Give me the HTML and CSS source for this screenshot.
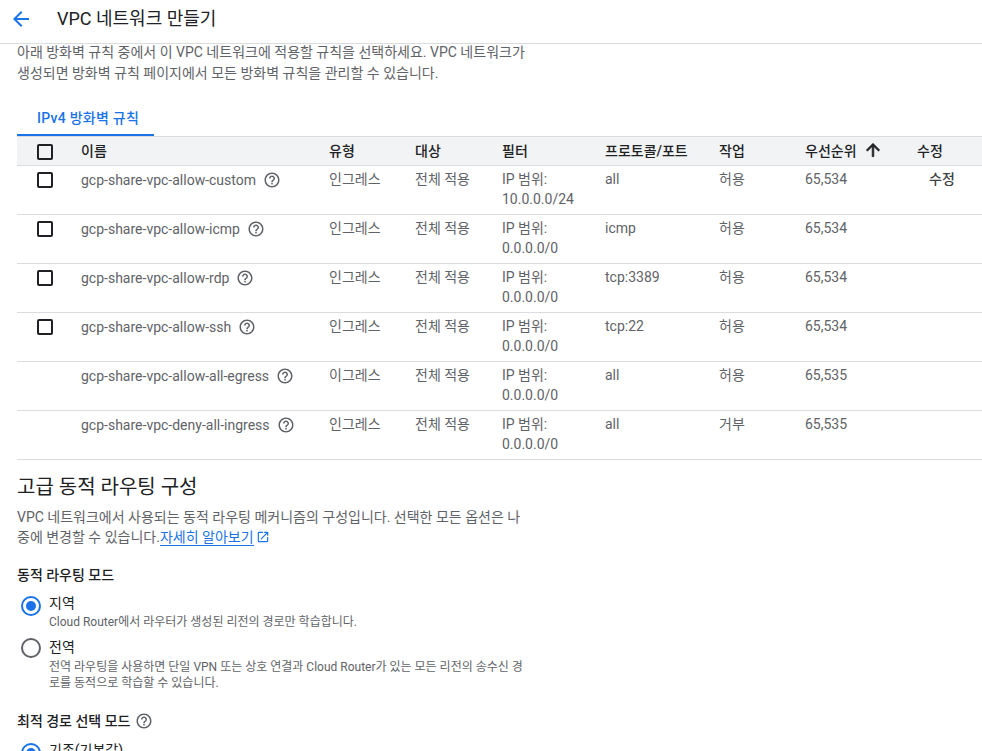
FILE: index.html
```html
<!DOCTYPE html>
<html lang="ko">
<head>
<meta charset="utf-8">
<title>VPC 네트워크 만들기</title>
<link rel="stylesheet" href="styles.css">
</head>
<body>
<header class="topbar">
  <svg class="back" viewBox="0 0 24 24" width="24" height="24"><path d="M20 11H7.83l5.59-5.59L12 4l-8 8 8 8 1.41-1.41L7.83 13H20z"/></svg>
  <h1 class="title">VPC 네트워크 만들기</h1>
</header>
<main class="content">
  <p class="intro">아래 방화벽 규칙 중에서 이 VPC 네트워크에 적용할 규칙을 선택하세요. VPC 네트워크가 생성되면 방화벽 규칙 페이지에서 모든 방화벽 규칙을 관리할 수 있습니다.</p>
  <div class="tabs"><div class="tab">IPv4 방화벽 규칙</div></div>
  <table class="rules">
    <colgroup><col class="c0"><col class="c1"><col class="c2"><col class="c3"><col class="c4"><col class="c5"><col class="c6"><col class="c7"><col class="c8"></colgroup>
    <thead>
      <tr>
        <th class="check"><span class="box"></span></th><th>이름</th><th>유형</th><th>대상</th><th>필터</th><th>프로토콜/포트</th><th>작업</th>
        <th><span class="sort">우선순위<svg viewBox="0 0 24 24" width="20" height="20"><path d="M4 12l1.41 1.41L11 7.83V20h2V7.83l5.58 5.59L20 12l-8-8z"/></svg></span></th><th>수정</th>
      </tr>
    </thead>
    <tbody>
      <tr>
        <td class="check"><span class="box"></span></td>
        <td><span class="name">gcp-share-vpc-allow-custom<svg class="help" viewBox="0 0 24 24" width="18" height="18"><use href="#help"/></svg></span></td>
        <td>인그레스</td><td>전체 적용</td><td>IP 범위:<br>10.0.0.0/24</td><td>all</td><td>허용</td><td>65,534</td><td class="edit">수정</td>
      </tr>
      <tr>
        <td class="check"><span class="box"></span></td>
        <td><span class="name">gcp-share-vpc-allow-icmp<svg class="help" viewBox="0 0 24 24" width="18" height="18"><use href="#help"/></svg></span></td>
        <td>인그레스</td><td>전체 적용</td><td>IP 범위:<br>0.0.0.0/0</td><td>icmp</td><td>허용</td><td>65,534</td><td></td>
      </tr>
      <tr>
        <td class="check"><span class="box"></span></td>
        <td><span class="name">gcp-share-vpc-allow-rdp<svg class="help" viewBox="0 0 24 24" width="18" height="18"><use href="#help"/></svg></span></td>
        <td>인그레스</td><td>전체 적용</td><td>IP 범위:<br>0.0.0.0/0</td><td>tcp:3389</td><td>허용</td><td>65,534</td><td></td>
      </tr>
      <tr>
        <td class="check"><span class="box"></span></td>
        <td><span class="name">gcp-share-vpc-allow-ssh<svg class="help" viewBox="0 0 24 24" width="18" height="18"><use href="#help"/></svg></span></td>
        <td>인그레스</td><td>전체 적용</td><td>IP 범위:<br>0.0.0.0/0</td><td>tcp:22</td><td>허용</td><td>65,534</td><td></td>
      </tr>
      <tr>
        <td class="check"></td>
        <td><span class="name">gcp-share-vpc-allow-all-egress<svg class="help" viewBox="0 0 24 24" width="18" height="18"><use href="#help"/></svg></span></td>
        <td>이그레스</td><td>전체 적용</td><td>IP 범위:<br>0.0.0.0/0</td><td>all</td><td>허용</td><td>65,535</td><td></td>
      </tr>
      <tr>
        <td class="check"></td>
        <td><span class="name">gcp-share-vpc-deny-all-ingress<svg class="help" viewBox="0 0 24 24" width="18" height="18"><use href="#help"/></svg></span></td>
        <td>인그레스</td><td>전체 적용</td><td>IP 범위:<br>0.0.0.0/0</td><td>all</td><td>거부</td><td>65,535</td><td></td>
      </tr>
    </tbody>
  </table>

  <section class="narrow">
    <h2 class="section-title">고급 동적 라우팅 구성</h2>
    <p class="desc">VPC 네트워크에서 사용되는 동적 라우팅 메커니즘의 구성입니다. 선택한 모든 옵션은 나중에 변경할 수 있습니다.<a class="link" href="#">자세히 알아보기</a><svg class="ext" viewBox="0 0 24 24" width="14" height="14"><path d="M19 19H5V5h7V3H5a2 2 0 0 0-2 2v14a2 2 0 0 0 2 2h14c1.1 0 2-.9 2-2v-7h-2v7zM14 3v2h3.59l-9.83 9.83 1.41 1.41L19 6.41V10h2V3h-7z"/></svg></p>
    <h3 class="sub first">동적 라우팅 모드</h3>
    <div class="radio">
      <span class="dot on"></span>
      <div><div class="r-label">지역</div><div class="r-help">Cloud Router에서 라우터가 생성된 리전의 경로만 학습합니다.</div></div>
    </div>
    <div class="radio">
      <span class="dot high"></span>
      <div><div class="r-label">전역</div><div class="r-help wide">전역 라우팅을 사용하면 단일 VPN 또는 상호 연결과 Cloud Router가 있는 모든 리전의 송수신 경로를 동적으로 학습할 수 있습니다.</div></div>
    </div>
    <h3 class="sub second">최적 경로 선택 모드<svg class="help tight" viewBox="0 0 24 24" width="18" height="18"><use href="#help"/></svg></h3>
    <div class="radio">
      <span class="dot on"></span>
      <div><div class="r-label">기존(기본값)</div></div>
    </div>
  </section>
</main>
<svg class="defs" width="0" height="0"><defs><path id="help" d="M11 18h2v-2h-2v2zm1-16C6.48 2 2 6.48 2 12s4.48 10 10 10 10-4.48 10-10S17.52 2 12 2zm0 18c-4.41 0-8-3.59-8-8s3.59-8 8-8 8 3.59 8 8-3.59 8-8 8zm0-14c-2.21 0-4 1.79-4 4h2c0-1.1.9-2 2-2s2 .9 2 2c0 2-3 1.75-3 5h2c0-2.25 3-2.5 3-5 0-2.21-1.79-4-4-4z"/></defs></svg>
</body>
</html>
```

FILE: styles.css
```css
html, body { margin: 0; height: 751px; overflow: hidden; background: #fff; }
body { font-family: Roboto, "Noto Sans CJK KR", sans-serif; font-size: 14px; color: #5f6368; }
.defs { position: absolute; }
.topbar { display: flex; align-items: center; height: 43px; border-bottom: 1px solid #dadce0; box-sizing: content-box; }
.back { fill: #1a73e8; margin-left: 9px; margin-top: -6px; flex: none; }
.title { margin: -5px 0 0 24px; font-size: 18px; font-weight: 400; color: #202124; line-height: 24px; }
.content { padding-left: 17px; }
.intro { margin: -2px 0 0; width: 516px; line-height: 21px; word-break: keep-all; }
.tabs { margin-top: 22px; }
.tab { width: 137px; height: 30px; box-sizing: border-box; border-bottom: 2px solid #1a73e8; color: #1a73e8; font-weight: 500; font-size: 14px; line-height: 24px; padding-left: 20px; letter-spacing: .25px; }
.rules { border-collapse: collapse; table-layout: fixed; width: 965px; }
.c0 { width: 64px; } .c1 { width: 248px; } .c2 { width: 86px; } .c3 { width: 87px; }
.c4 { width: 103px; } .c5 { width: 114px; } .c6 { width: 86px; } .c7 { width: 112px; } .c8 { width: 65px; }
.rules th { height: 26px; padding: 0 0 2px; background: #f1f3f4; text-align: left; font-weight: 500; color: #202124; border-top: 1px solid #dadce0; border-bottom: 1px solid #dadce0; }
.rules td { height: 48px; padding: 3px 0 5px; box-sizing: border-box; vertical-align: top; line-height: 20px; border-bottom: 1px solid #dadce0; }
.rules tbody tr { height: 49px; }
.rules td.check, .rules th.check { padding-left: 20px; }
.rules td.check { padding-top: 6px; }
.rules th .box { margin-top: 4px; }
.box { display: block; width: 12px; height: 12px; border: 2px solid #202124; border-radius: 2px; }
.name { display: inline-flex; align-items: center; padding-top: 1px; }
.help { fill: #5f6368; margin-left: 7px; flex: none; }
.help.tight { margin-left: 5px; vertical-align: -4px; }
.sort { display: inline-flex; align-items: center; gap: 6px; }
.sort svg { fill: #202124; stroke: #202124; stroke-width: .8; }
.edit { color: #3c4043; font-weight: 500; padding-left: 12px !important; }
.narrow { width: 508px; }
.section-title { margin: 13px 0 0; font-size: 20px; font-weight: 400; line-height: 28px; color: #202124; }
.desc { margin: 6px 0 0; line-height: 20px; }
.link { color: #1a73e8; text-decoration: none; border-bottom: 1px solid #1a73e8; }
.ext { fill: #1a73e8; margin-left: 2px; vertical-align: -2px; }
.sub { margin: 0; font-size: 14px; font-weight: 500; color: #202124; line-height: 20px; }
.sub.first { margin-top: 18px; margin-bottom: 8px; }
.sub.second { margin-top: 20px; margin-bottom: 9px; }
.radio { display: flex; gap: 8px; margin-left: 4px; margin-bottom: 7px; }
.dot { width: 20px; height: 20px; box-sizing: border-box; border: 2px solid #5f6368; border-radius: 50%; flex: none; margin-top: 3px; position: relative; }
.dot.high { margin-top: 1px; }
.dot.on { border-color: #1a73e8; }
.dot.on::after { content: ""; position: absolute; inset: 3px; border-radius: 50%; background: #1a73e8; }
.r-label { font-size: 14px; line-height: 20px; color: #202124; }
.r-help { font-size: 12px; line-height: 16px; margin-top: 1px; }
.r-help.wide { margin-top: 2px; }
```
